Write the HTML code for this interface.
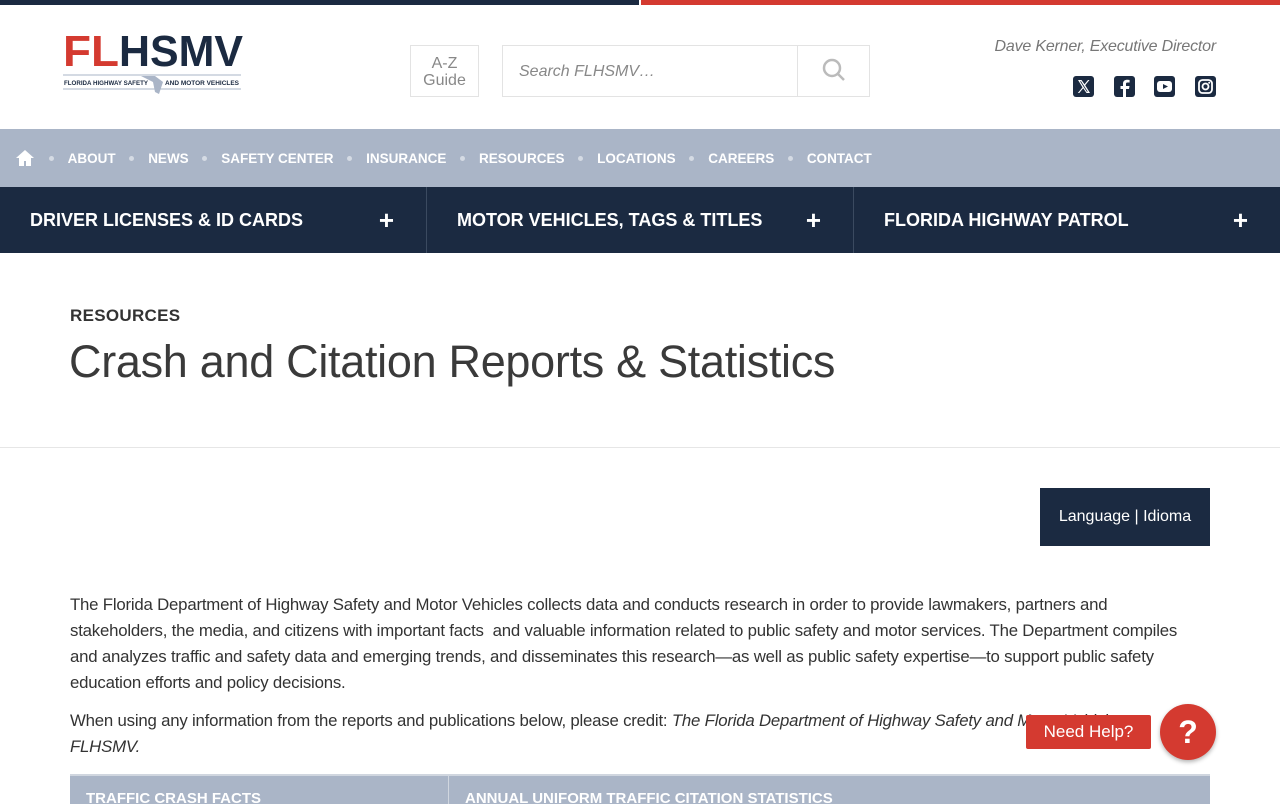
<!DOCTYPE html>
<html><head><meta charset="utf-8"><style>
*{margin:0;padding:0;box-sizing:border-box}
body{width:1280px;height:800px;overflow:hidden;font-family:"Liberation Sans",sans-serif;background:#fff;color:#333;position:relative}
.topbar{height:5px;display:flex}.topbar div{flex:1}
.hdr{height:124px;position:relative}
.logo{position:absolute;left:63px;top:24px}
.az{position:absolute;left:410px;top:40px;width:69px;height:52px;border:1px solid #e3e3e3;text-align:center;color:#888;font-size:16px;line-height:17px;padding-top:9px}
.search{position:absolute;left:502px;top:40px;width:368px;height:52px;border:1px solid #e3e3e3}
.search span{position:absolute;left:16px;top:17px;font-style:italic;color:#888;font-size:16px}
.search .btn{position:absolute;right:0;top:0;width:72px;height:50px;border-left:1px solid #e3e3e3}
.dir{position:absolute;right:64px;top:33px;font-style:italic;color:#777;font-size:16px;letter-spacing:-.2px}
.soc{position:absolute;top:71px;width:21px;height:21px;background:#1b2a41;border-radius:3px}
.nav1{height:58px;background:#aab5c7;display:flex;align-items:center;padding-left:15px;font-weight:bold;color:#fff;font-size:13.5px}
.nav1 .dot{width:5px;height:5px;border-radius:50%;background:#d5dbe4;margin:0 13.8px}
.nav2{height:66px;background:#1b2a41;display:flex}
.nav2 div{flex:1;color:#fff;font-weight:bold;font-size:18px;padding:23px 0 0 30px;position:relative;border-right:1px solid #3b4a60}
.nav2 div b{position:absolute;right:32px;top:18px;font-size:26px}
.crumb{position:absolute;left:70px;top:306px;font-weight:bold;font-size:17px;color:#333;letter-spacing:.3px}
h1{position:absolute;left:69px;top:336px;font-weight:normal;font-size:45px;color:#3a3a3a;letter-spacing:-.3px}
.hr{position:absolute;left:0;right:0;top:447px;border-top:1px solid #e6e6e6}
.lang{position:absolute;left:1040px;top:488px;width:170px;height:58px;background:#1b2a41;color:#fff;font-size:16px;text-align:center;line-height:58px}
.p{position:absolute;left:70px;width:1122px;font-size:16.8px;line-height:26px;color:#333;letter-spacing:-.2px}
.tbl{position:absolute;left:70px;top:774px;width:1140px;height:30px;background:#aab5c7;border-top:2px solid #d0d6df}
.tbl span{position:absolute;top:14px;color:#fff;font-weight:bold;font-size:15px}
.need{position:absolute;left:1026px;top:715px;width:125px;height:34px;background:#d43a30;color:#fff;font-size:17px;text-align:center;line-height:34px;border-radius:2px}
.q{position:absolute;left:1160px;top:704px;width:56px;height:56px;border-radius:50%;background:#d43a30;color:#fff;font-weight:bold;font-size:32px;text-align:center;line-height:56px;box-shadow:0 2px 4px rgba(0,0,0,.3)}
</style></head><body>
<div class="topbar"><div style="background:#1b2a41"></div><div style="background:#d43a30;margin-left:2px"></div></div>
<div class="hdr">
<div class="logo"><svg width="182" height="66" viewBox="0 0 182 66">
<text x="0" y="37" font-family="Liberation Sans" font-weight="bold" font-size="44" fill="#d43a30" textLength="56" lengthAdjust="spacingAndGlyphs">FL</text>
<text x="56" y="37" font-family="Liberation Sans" font-weight="bold" font-size="44" fill="#1b2a41" textLength="124" lengthAdjust="spacingAndGlyphs">HSMV</text>
<line x1="0" y1="46" x2="178" y2="46" stroke="#aab5c7"/><line x1="0" y1="60" x2="178" y2="60" stroke="#aab5c7"/>
<text x="1" y="56" font-family="Liberation Sans" font-weight="bold" font-size="6.5" fill="#1b2a41" textLength="84" lengthAdjust="spacingAndGlyphs">FLORIDA HIGHWAY SAFETY</text>
<path d="M78 47h14l8 6l-4 12l-4 -2l-2 -10z" fill="#aab5c7"/>
<text x="102" y="56" font-family="Liberation Sans" font-weight="bold" font-size="6.5" fill="#1b2a41" textLength="74" lengthAdjust="spacingAndGlyphs">AND MOTOR VEHICLES</text>
</svg></div>
<div class="az">A-Z<br>Guide</div>
<div class="search"><span>Search FLHSMV…</span><div class="btn"><svg width="72" height="50"><circle cx="34" cy="22" r="8" fill="none" stroke="#bbb" stroke-width="2.5"/><line x1="40" y1="28" x2="46" y2="34" stroke="#bbb" stroke-width="2.5"/></svg></div></div>
<div class="dir">Dave Kerner, Executive Director</div>
<div class="soc" style="left:1073px"><svg width="21" height="21"><path d="M5 4h3.5l3 4.3L15 4h1.5l-4.3 5.3L17 17h-3.5l-3.3-4.7L6.3 17H4.8l4.7-5.6z" fill="#fff"/><path d="M7 5.2h1l6.8 10.6h-1z" fill="#1b2a41"/></svg></div>
<div class="soc" style="left:1114px"><svg width="21" height="21"><path d="M12 21v-8h3l.5-3H12V8c0-1 .3-1.5 1.6-1.5H15.6V4c-.5 0-1.4-.2-2.4-.2C11 3.8 9 5 9 7.5V10H6.5v3H9v8z" fill="#fff"/></svg></div>
<div class="soc" style="left:1154px"><svg width="21" height="21"><rect x="3" y="5" width="15" height="11" rx="3" fill="#fff"/><path d="M9 8l5 2.5L9 13z" fill="#1b2a41"/></svg></div>
<div class="soc" style="left:1195px"><svg width="21" height="21"><rect x="4" y="4" width="13" height="13" rx="3.5" fill="none" stroke="#fff" stroke-width="1.8"/><circle cx="10.5" cy="10.5" r="3" fill="none" stroke="#fff" stroke-width="1.8"/><circle cx="14.2" cy="6.8" r="1" fill="#fff"/></svg></div>
</div>
<div class="nav1"><svg width="20" height="18"><path d="M10 1L1 9h3v8h5v-5h2v5h5V9h3z" fill="#fff"/></svg><span class="dot"></span>ABOUT<span class="dot"></span>NEWS<span class="dot"></span>SAFETY CENTER<span class="dot"></span>INSURANCE<span class="dot"></span>RESOURCES<span class="dot"></span>LOCATIONS<span class="dot"></span>CAREERS<span class="dot"></span>CONTACT</div>
<div class="nav2"><div>DRIVER LICENSES &amp; ID CARDS<b>+</b></div><div>MOTOR VEHICLES, TAGS &amp; TITLES<b>+</b></div><div style="border:0">FLORIDA HIGHWAY PATROL<b>+</b></div></div>
<div class="crumb">RESOURCES</div>
<h1>Crash and Citation Reports &amp; Statistics</h1>
<div class="hr"></div>
<div class="lang">Language | Idioma</div>
<div class="p" style="top:592px">The Florida Department of Highway Safety and Motor Vehicles collects data and conducts research in order to provide lawmakers, partners and stakeholders, the media, and citizens with important facts&nbsp; and valuable information related to public safety and motor services. The Department compiles and analyzes traffic and safety data and emerging trends, and disseminates this research—as well as public safety expertise—to support public safety education efforts and policy decisions.</div>
<div class="p" style="top:708px">When using any information from the reports and publications below, please credit: <i>The Florida Department of Highway Safety and Motor Vehicles</i> or <i>FLHSMV.</i></div>
<div class="tbl"><span style="left:16px">TRAFFIC CRASH FACTS</span><span style="left:395px">ANNUAL UNIFORM TRAFFIC CITATION STATISTICS</span><div style="position:absolute;left:378px;top:0;bottom:0;border-left:1px solid #d0d6df"></div></div>
<div class="need">Need Help?</div>
<div class="q">?</div>
</body></html>
